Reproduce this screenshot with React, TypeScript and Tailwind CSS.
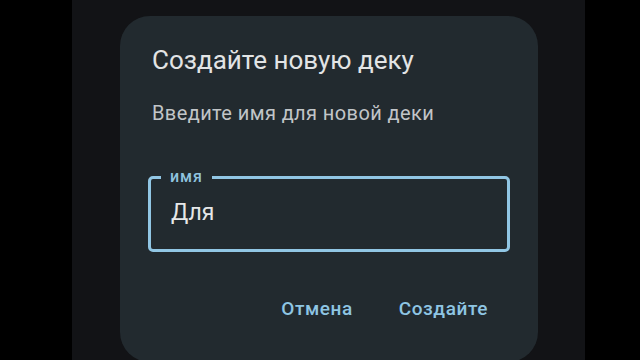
import React from "react";

export default function App() {
  return (
    <div
      className="w-[640px] h-[360px] overflow-hidden bg-black flex"
      style={{ fontFamily: "Roboto, 'Noto Sans', sans-serif" }}
    >
      <div className="ml-[72px] w-[513px] h-full bg-[#121316] pl-[48px] pt-[16px]">
        <div className="w-[418px] h-[346px] rounded-[30px] bg-[#222a2f] px-[28px] pt-[28px]">
          <div className="pl-[4px] text-[26px] leading-[32px] text-[#e2e4e5]">
            Создайте новую деку
          </div>
          <div className="pl-[4px] mt-[25px] text-[20px] leading-[24px] text-[#c1c5c8] tracking-[0.02em]">
            Введите имя для новой деки
          </div>
          <fieldset className="mt-[44px] h-[83px] border-[3px] border-[#91c6e4] rounded-[5px] pl-[10px] pr-[10px] m-0">
            <legend className="px-[9px] text-[16px] leading-[16px] font-medium text-[#8fc3df] tracking-[0.06em]">
              имя
            </legend>
            <div className="pl-[10px] mt-[14px] text-[23px] leading-[28px] text-[#e6e7e8]">
              Для
            </div>
          </fieldset>
          <div className="mt-[45px] flex justify-end pr-[22px] gap-[46px] text-[19px] leading-[24px] font-medium text-[#8ec5e3] tracking-[0.03em]">
            <span>Отмена</span>
            <span>Создайте</span>
          </div>
        </div>
      </div>
    </div>
  );
}
